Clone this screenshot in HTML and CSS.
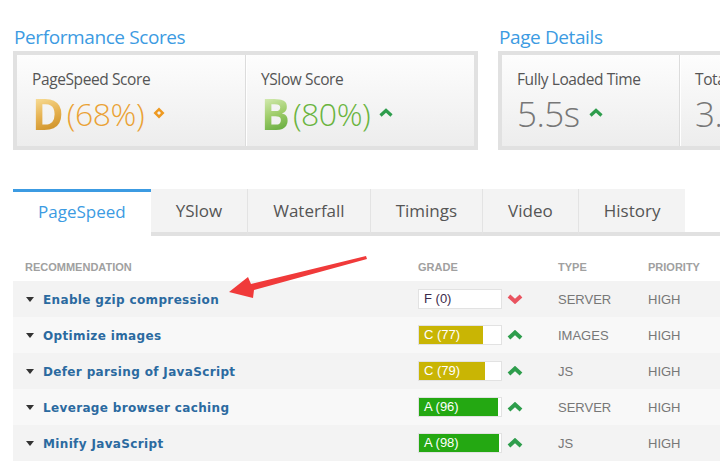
FILE: index.html
```html
<!DOCTYPE html>
<html>
<head>
<meta charset="utf-8">
<link rel="stylesheet" href="styles.css">
</head>
<body>
<div class="page">
  <div class="top">
    <section class="section perf">
      <h2 class="heading">Performance Scores</h2>
      <div class="scorebox">
        <div class="cell">
          <div class="label">PageSpeed Score</div>
          <div class="value">
            <span class="grade grade-d">D</span><span class="pct pct-d">(68%)</span>
            <svg class="ind" width="12" height="12" viewBox="0 0 12 12"><path d="M6 0.5 L11.5 6 L6 11.5 L0.5 6 Z M6 4 L4 6 L6 8 L8 6 Z" fill="#ee9a22" fill-rule="evenodd"/></svg>
          </div>
        </div>
        <div class="cell">
          <div class="label">YSlow Score</div>
          <div class="value">
            <span class="grade grade-b">B</span><span class="pct pct-b">(80%)</span>
            <svg class="ind" width="14" height="9" viewBox="0 0 14 9"><polyline points="1.5,7.5 7,2.5 12.5,7.5" fill="none" stroke="#2e9d4c" stroke-width="3.2"/></svg>
          </div>
        </div>
      </div>
    </section>
    <section class="section details">
      <h2 class="heading">Page Details</h2>
      <div class="scorebox">
        <div class="cell cell-time">
          <div class="label">Fully Loaded Time</div>
          <div class="value">
            <span class="num">5.5s</span>
            <svg class="ind" width="14" height="9" viewBox="0 0 14 9"><polyline points="1.5,7.5 7,2.5 12.5,7.5" fill="none" stroke="#2e9d4c" stroke-width="3.2"/></svg>
          </div>
        </div>
        <div class="cell">
          <div class="label">Total Page Size</div>
          <div class="value"><span class="num">3.1MB</span></div>
        </div>
      </div>
    </section>
  </div>

  <nav class="tabs">
    <div class="tab active">PageSpeed</div>
    <div class="tab">YSlow</div>
    <div class="tab">Waterfall</div>
    <div class="tab">Timings</div>
    <div class="tab">Video</div>
    <div class="tab">History</div>
    <div class="tab-fill"></div>
  </nav>

  <div class="tablewrap">
    <table class="recs">
      <thead>
        <tr>
          <th class="c-rec">RECOMMENDATION</th>
          <th class="c-grade">GRADE</th>
          <th class="c-type">TYPE</th>
          <th class="c-pri">PRIORITY</th>
        </tr>
      </thead>
      <tbody>
        <tr>
          <td class="c-rec"><span class="caret"></span><a class="rec">Enable gzip compression</a></td>
          <td class="c-grade"><div class="gcell"><div class="bar"><div class="fill" style="width:0%"></div><span class="btxt dark">F (0)</span></div><svg class="chev" width="16" height="10" viewBox="0 0 16 10"><polyline points="2,2 8,7.5 14,2" fill="none" stroke="#e9535f" stroke-width="4"/></svg></div></td>
          <td class="c-type">SERVER</td>
          <td class="c-pri">HIGH</td>
        </tr>
        <tr>
          <td class="c-rec"><span class="caret"></span><a class="rec">Optimize images</a></td>
          <td class="c-grade"><div class="gcell"><div class="bar"><div class="fill fill-c" style="width:78%"></div><span class="btxt">C (77)</span></div><svg class="chev" width="16" height="10" viewBox="0 0 16 10"><polyline points="2,8 8,2.5 14,8" fill="none" stroke="#2e9d4c" stroke-width="4"/></svg></div></td>
          <td class="c-type">IMAGES</td>
          <td class="c-pri">HIGH</td>
        </tr>
        <tr>
          <td class="c-rec"><span class="caret"></span><a class="rec">Defer parsing of JavaScript</a></td>
          <td class="c-grade"><div class="gcell"><div class="bar"><div class="fill fill-c" style="width:80%"></div><span class="btxt">C (79)</span></div><svg class="chev" width="16" height="10" viewBox="0 0 16 10"><polyline points="2,8 8,2.5 14,8" fill="none" stroke="#2e9d4c" stroke-width="4"/></svg></div></td>
          <td class="c-type">JS</td>
          <td class="c-pri">HIGH</td>
        </tr>
        <tr>
          <td class="c-rec"><span class="caret"></span><a class="rec">Leverage browser caching</a></td>
          <td class="c-grade"><div class="gcell"><div class="bar"><div class="fill fill-a" style="width:96%"></div><span class="btxt">A (96)</span></div><svg class="chev" width="16" height="10" viewBox="0 0 16 10"><polyline points="2,8 8,2.5 14,8" fill="none" stroke="#2e9d4c" stroke-width="4"/></svg></div></td>
          <td class="c-type">SERVER</td>
          <td class="c-pri">HIGH</td>
        </tr>
        <tr>
          <td class="c-rec"><span class="caret"></span><a class="rec">Minify JavaScript</a></td>
          <td class="c-grade"><div class="gcell"><div class="bar"><div class="fill fill-a" style="width:98%"></div><span class="btxt">A (98)</span></div><svg class="chev" width="16" height="10" viewBox="0 0 16 10"><polyline points="2,8 8,2.5 14,8" fill="none" stroke="#2e9d4c" stroke-width="4"/></svg></div></td>
          <td class="c-type">JS</td>
          <td class="c-pri">HIGH</td>
        </tr>
      </tbody>
    </table>
  </div>

  <svg class="annot" width="720" height="465" viewBox="0 0 720 465">
    <polygon points="229,292 248,277 251,284 366,256 367,259 254,290 253,298" fill="#f03a3a"/>
  </svg>
</div>
</body>
</html>
```

FILE: styles.css
```css
html, body {
  margin: 0;
  padding: 0;
  background: #fff;
}
.page {
  position: relative;
  width: 720px;
  height: 465px;
  overflow: hidden;
  padding-left: 13px;
  box-sizing: border-box;
  font-family: "Open Sans", "Liberation Sans", sans-serif;
}
.top {
  display: flex;
  gap: 20px;
  padding-top: 25px;
}
.section {
  flex: none;
}
.perf { width: 465px; }
.details { width: 320px; }
.heading {
  margin: 0 0 2px 1px;
  font-size: 19px;
  line-height: 24px;
  font-weight: 400;
  color: #3c9be2;
  letter-spacing: -0.4px;
}
.scorebox {
  display: flex;
  border: 4px solid #e1e1e1;
  height: 91px;
  background: linear-gradient(#fdfdfd, #ededed);
}
.cell {
  flex: 1;
  padding: 14px 15px 0 15px;
  border-left: 1px solid #dcdcdc;
  box-shadow: inset 1px 0 0 #fff;
}
.cell:first-child {
  border-left: none;
  box-shadow: none;
}
.cell-time {
  flex: none;
  width: 147px;
}
.label {
  font-size: 15.5px;
  line-height: 20px;
  color: #555;
  letter-spacing: -0.4px;
  white-space: nowrap;
}
.value {
  display: flex;
  align-items: center;
  margin-top: 6px;
  height: 38px;
  white-space: nowrap;
}
.grade {
  display: inline-block;
  font-size: 43px;
  line-height: 38px;
  height: 38px;
  font-weight: 700;
  background-clip: text;
  -webkit-background-clip: text;
  color: transparent;
}
.grade-d {
  background-image: linear-gradient(160deg, #f7dc95 10%, #e6b251 50%, #c98a1e 95%);
}
.grade-b {
  background-image: linear-gradient(160deg, #d3eab0 10%, #9fcd6a 50%, #5fa83a 95%);
}
.pct {
  font-size: 32px;
  line-height: 38px;
  font-weight: 300;
  margin-left: 3px;
  letter-spacing: -0.5px;
}
.pct-d { color: #eaa235; }
.pct-b { color: #6ab43e; }
.num {
  font-size: 35px;
  line-height: 38px;
  font-weight: 300;
  color: #777;
  letter-spacing: -0.5px;
}
.ind {
  margin-left: 9px;
  margin-top: -3px;
}

/* tabs */
.tabs {
  display: flex;
  margin-top: 39px;
  height: 47px;
  margin-right: -13px;
}
.tab {
  flex: none;
  padding: 0 25px;
  background: #f3f3f3;
  border-left: 1px solid #e3e3e3;
  border-bottom: 4px solid #e1e1e1;
  font-size: 17px;
  line-height: 43px;
  color: #555;
  letter-spacing: 0;
}
.tab.active {
  background: #fff;
  border-left: none;
  border-top: 3px solid #3c9be2;
  border-bottom: 4px solid #fff;
  line-height: 40px;
  color: #3c9be2;
}
.tab.active + .tab {
  border-left: none;
}
.tab-fill {
  flex: 1;
  border-bottom: 4px solid #e1e1e1;
}

/* table */
.tablewrap {
  margin-right: -13px;
}
.recs {
  border-collapse: collapse;
  width: 707px;
  table-layout: fixed;
  font-family: "Liberation Sans", Arial, sans-serif;
}
.recs th {
  text-align: left;
  font-size: 11px;
  font-weight: 700;
  color: #a0a0a0;
  height: 45px;
  vertical-align: bottom;
  padding: 0 0 8px 0;
  box-sizing: border-box;
}
.recs th.c-rec { padding-left: 12px; }
.c-rec { width: 405px; }
.c-grade { width: 140px; }
.c-type { width: 90px; }
.recs td {
  height: 36px;
  padding: 0;
  font-size: 13px;
  color: #777;
  vertical-align: middle;
}
.recs tbody tr:nth-child(odd) td { background: #f3f3f3; }
.recs tbody tr:nth-child(even) td { background: #f8f8f8; }
.recs td.c-rec {
  padding-left: 13px;
  white-space: nowrap;
}
.caret {
  display: inline-block;
  width: 0;
  height: 0;
  border-left: 4px solid transparent;
  border-right: 4px solid transparent;
  border-top: 5px solid #333;
  margin-right: 9px;
  vertical-align: 2px;
}
.rec {
  font-family: "DejaVu Sans", Verdana, sans-serif;
  font-weight: 700;
  font-size: 12px;
  color: #2b6aa0;
  letter-spacing: 0.35px;
}
.gcell {
  display: flex;
  align-items: center;
}
.bar {
  position: relative;
  width: 82px;
  height: 18px;
  border: 1px solid #e2e2e2;
  background: #fff;
}
.fill {
  height: 100%;
}
.fill-c { background: #c9b504; }
.fill-a { background: #24a812; }
.btxt {
  position: absolute;
  left: 5px;
  top: 0;
  line-height: 18px;
  font-size: 13px;
  color: #fff;
}
.btxt.dark { color: #3b2b4b; }
.chev {
  margin-left: 5px;
}
.annot {
  position: absolute;
  left: 0;
  top: 0;
  pointer-events: none;
}
```
